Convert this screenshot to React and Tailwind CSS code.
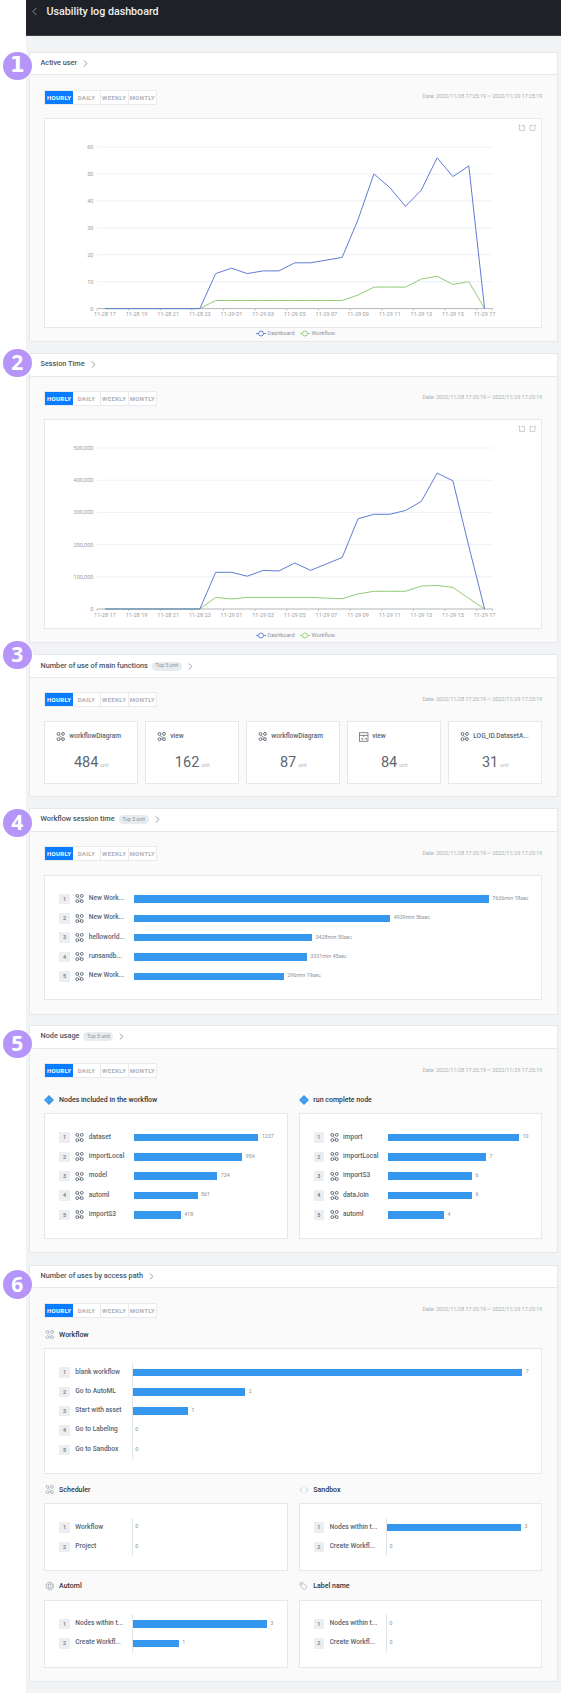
import React from 'react';
import { ChevronLeft, ChevronRight, Code } from 'lucide-react';

const FONT = 'font-["Roboto","Liberation_Sans",sans-serif]';
const labels = ['11-28 17', '11-28 19', '11-28 21', '11-28 23', '11-29 01', '11-29 03', '11-29 05', '11-29 07', '11-29 09', '11-29 11', '11-29 13', '11-29 15', '11-29 17'];

const zeros = [0, 0, 0, 0, 0, 0, 0];
const activeUser = {
  max: 60,
  ticks: [0, 10, 20, 30, 40, 50, 60],
  top: 28,
  bottom: 189.6,
  blue: [...zeros, 13, 15, 13, 14, 14, 17, 17, 18, 19, 33, 50, 45, 38, 44, 56, 49, 53, 0],
  green: [...zeros, 3, 3, 3, 3, 3, 3, 3, 3, 3, 5, 8, 8, 8, 11, 12, 9, 10, 0],
};
const sessionTime = {
  max: 500000,
  ticks: [0, 100000, 200000, 300000, 400000, 500000],
  top: 28,
  bottom: 189,
  blue: [...zeros, 114000, 114000, 102000, 120000, 118000, 143000, 120000, 140000, 160000, 280000, 294000, 294000, 306000, 334000, 422000, 398000, 195000, 0],
  green: [...zeros, 36000, 31000, 36000, 36000, 36000, 36000, 36000, 34000, 32000, 47000, 55000, 55000, 55000, 71000, 73000, 67000, 33000, 0],
};

const NodeIcon = ({ className = 'w-[9.5px] h-[9px] text-[#4b5563]' }) => (
  <svg viewBox="0 0 24 24" className={`shrink-0 ${className}`} fill="none" stroke="currentColor" strokeWidth="2.2">
    <circle cx="6" cy="5" r="3.8" />
    <circle cx="18" cy="5" r="3.8" />
    <circle cx="6" cy="19" r="3.8" />
    <circle cx="18" cy="19" r="3.8" />
    <path d="M7 9l9 6M9.8 19h4.4" strokeWidth="1.6" />
  </svg>
);

const TableIcon = () => (
  <svg viewBox="0 0 18 18" className="w-[9.5px] h-[10px] shrink-0 text-[#4b5563]" fill="none" stroke="currentColor" strokeWidth="1.3">
    <rect x="1" y="1" width="16" height="16" />
    <path d="M1 6h16M9 6v3M4 12h3v3M11 12h3v3" />
  </svg>
);

const Diamond = () => (
  <svg viewBox="0 0 20 20" className="w-[10px] h-[10px] shrink-0">
    <path d="M10 0l10 10-10 10L0 10z" fill="#3b97ee" />
    <path d="M8 8.5L6.5 10 8 11.5M12 8.5l1.5 1.5-1.5 1.5" stroke="#dbeafe" strokeWidth="1" fill="none" />
  </svg>
);

const ChipIcon = () => (
  <svg viewBox="0 0 20 20" className="w-[9.5px] h-[10px] shrink-0 text-[#9ca3af]" fill="none" stroke="currentColor" strokeWidth="1.2">
    <rect x="4" y="4" width="12" height="12" rx="1.5" />
    <rect x="7.5" y="7" width="5" height="6" />
    <path d="M7 1v3M10 1v3M13 1v3M7 16v3M10 16v3M13 16v3M1 7h3M1 10h3M1 13h3M16 7h3M16 10h3M16 13h3" />
  </svg>
);

const TagIcon = () => (
  <svg viewBox="0 0 20 20" className="w-[9.5px] h-[10.5px] shrink-0 text-[#9ca3af]" fill="none" stroke="currentColor" strokeWidth="1.3">
    <path d="M2 4.5L8 2l9 9.5-6 6.5-8.5-9z" />
    <circle cx="6" cy="6" r="1.2" />
    <path d="M5 2l-1.5-1" />
  </svg>
);

const CropIcon = ({ flip }) => (
  <svg viewBox="0 0 14 14" className={`w-[7.5px] h-[7.5px] ${flip ? '-scale-x-100' : ''}`} fill="none" stroke="#a6a8ae" strokeWidth="1.1">
    <path d="M3 1v2M1 3h2v9h9V3H6" />
  </svg>
);

const Badge = ({ n, top }) => (
  <div
    className={`absolute left-[-27px] z-10 flex h-[28.5px] w-[28.5px] items-center justify-center rounded-full bg-[#b596f8] ring-1 ring-white text-white font-bold text-[21px] ${n === 1 ? 'font-["DejaVu_Sans",sans-serif]' : 'font-["Open_Sans",sans-serif]'}`}
    style={{ top }}
  >
    {n}
  </div>
);

const Tabs = () => (
  <div className="flex h-[15px] w-[113px] border border-[#e9ebee] bg-white text-[6px] font-bold tracking-[0.35px] text-[#aeb2b9]">
    <div className="flex w-[28px] items-center justify-center bg-[#0a7cff] text-white">HOURLY</div>
    <div className="flex w-[28px] items-center justify-center border-r border-[#e9ebee]">DAILY</div>
    <div className="flex w-[28px] items-center justify-center border-r border-[#e9ebee]">WEEKLY</div>
    <div className="flex w-[28px] items-center justify-center">MONTLY</div>
  </div>
);

const Toolbar = () => (
  <div className="flex items-center justify-between">
    <Tabs />
    <span className="text-[5.3px] text-[#a9adb3]">Date: 2022/11/28 17:25:19 ~ 2022/11/29 17:25:19</span>
  </div>
);

const Section = ({ n, badgeTop, title, top5, children, className = '' }) => (
  <section className={`relative mx-[3.5px] border border-[#e6e8eb] bg-[#fafafa] ${className}`}>
    <Badge n={n} top={badgeTop} />
    <div className="flex h-[22.6px] items-center border-b border-[#e6e8eb] bg-white pl-[10.5px]">
      <span className="text-[7.3px] font-medium text-[#4b5563]">{title}</span>
      {top5 && (
        <span className="ml-[4px] flex h-[9px] items-center rounded-full bg-[#e9ecef] px-[3.5px] text-[5.2px] text-[#8b929b]">Top 5 unit</span>
      )}
      <ChevronRight className="ml-[3px] h-[11px] w-[11px] text-[#5b6470]" strokeWidth={1.4} />
    </div>
    <div className="px-[14.3px] pt-[14.4px]">{children}</div>
  </section>
);

const fmt = (v) => v.toLocaleString('en-US');

const Chart = ({ data }) => {
  const w = 498;
  const h = 208.3;
  const left = 52;
  const right = 447.5;
  const band = (right - left) / 25;
  const xAt = (i) => left + band * (i + 0.5);
  const yAt = (v) => data.bottom - (v / data.max) * (data.bottom - data.top);
  const line = (vals) => vals.map((v, i) => `${xAt(i).toFixed(1)},${yAt(v).toFixed(1)}`).join(' ');
  return (
    <div className="mt-[13px]">
      <div className="relative h-[210.3px] border border-[#e6e8eb] bg-white">
        <svg viewBox={`0 0 ${w} ${h}`} width={w} height={h} className="block" fontFamily="Roboto, sans-serif">
          {data.ticks.map((t) => (
            <g key={t}>
              {t !== 0 && <line x1={left} x2={right} y1={yAt(t)} y2={yAt(t)} stroke="#eef1f6" strokeWidth="1" />}
              <text x={left - 3.5} y={yAt(t) + 2} textAnchor="end" fontSize="5.6" fill="#9b9da3">{fmt(t)}</text>
            </g>
          ))}
          <line x1={left} x2={right} y1={data.bottom} y2={data.bottom} stroke="#b4b6bb" strokeWidth="1" />
          {Array.from({ length: 13 }).map((_, i) => {
            const x = left + band * i * 2;
            return <line key={i} x1={x} x2={x} y1={data.bottom} y2={data.bottom + 2} stroke="#b4b6bb" strokeWidth="0.8" />;
          })}
          <line x1={right} x2={right} y1={data.bottom} y2={data.bottom + 2} stroke="#b4b6bb" strokeWidth="0.8" />
          {labels.map((l, i) => (
            <text key={l} x={xAt(i * 2)} y={data.bottom + 7.8} textAnchor="middle" fontSize="5.6" fill="#9b9da3">{l}</text>
          ))}
          <polyline points={line(data.green)} fill="none" stroke="#91cc75" strokeWidth="1" />
          <polyline points={line(data.blue)} fill="none" stroke="#5f7bd3" strokeWidth="1" />
        </svg>
        <div className="absolute right-[4.5px] top-[5.5px] flex gap-[3.5px]">
          <CropIcon />
          <CropIcon flip />
        </div>
      </div>
      <div className="flex h-[13px] items-start justify-center pt-[2.4px] pl-[4px] text-[5.6px] leading-[7px] text-[#8f9197]">
        <svg viewBox="0 0 20 14" className="h-[7px] w-[10px]" fill="none" stroke="#5f7bd3" strokeWidth="1.8"><path d="M0 7h20" /><circle cx="10" cy="7" r="5" fill="#fafafa" /></svg>
        <span className="ml-[2px]">Dashboard</span>
        <svg viewBox="0 0 20 14" className="ml-[5px] h-[7px] w-[10px]" fill="none" stroke="#91cc75" strokeWidth="1.8"><path d="M0 7h20" /><circle cx="10" cy="7" r="5" fill="#fafafa" /></svg>
        <span className="ml-[2px]">Workflow</span>
      </div>
    </div>
  );
};

const Metric = ({ name, value, table }) => (
  <div className="flex h-[62.4px] flex-1 flex-col border border-[#e6e8eb] bg-white">
    <div className="flex items-center gap-[3.5px] pl-[11px] pt-[9.5px] text-[6.6px] font-medium text-[#5b6470]">
      {table ? <TableIcon /> : <NodeIcon />}
      <span>{name}</span>
    </div>
    <div className="mt-[12.5px] flex items-baseline justify-center text-[#5f6670]">
      <span className="text-[14.5px] leading-[17px]">{value}</span>
      <span className="ml-[2px] text-[5px] text-[#b3b7bd]">unit</span>
    </div>
  </div>
);

const Rank = ({ n }) => (
  <span className="mr-[5.5px] flex h-[10.5px] w-[10.5px] shrink-0 items-center justify-center bg-[#eceef1] text-[5.5px] font-medium text-[#6b7280]">{n}</span>
);

// one rank row; width is the bar length in px
const BarRow = ({ n, name, width, value, icon = true }) => (
  <div className="flex h-[19.33px] items-center">
    <Rank n={n} />
    {icon && <NodeIcon className="mr-[4.5px] h-[9px] w-[9px] text-[#4b5563]" />}
    <span className={`shrink-0 truncate text-[6.6px] font-medium text-[#5b6470] ${icon ? 'w-[45px]' : 'w-[56.5px]'}`}>{name}</span>
    <div className="flex items-center">
      {width > 0 && <div className="h-[7.5px] bg-[#3597ee]" style={{ width }} />}
      <span className="ml-[3.5px] text-[5.3px] text-[#8c9097]">{value}</span>
    </div>
  </div>
);

const BarBox = ({ rows, className = '', icon = true, axis = false }) => (
  <div className={`border border-[#e6e8eb] bg-white py-[13.7px] pl-[14px] ${className}`}>
    <div className="relative">
      {axis && <div className="absolute top-0 bottom-0 left-[72.5px] w-px bg-[#e3e5e8]" />}
      {rows.map((r, i) => (
        <BarRow key={i} n={i + 1} icon={icon} {...r} />
      ))}
    </div>
  </div>
);

const Heading = ({ icon, children, className = '' }) => (
  <div className={`flex h-[10px] items-center gap-[4.8px] text-[7px] font-medium text-[#2f343b] ${className}`}>
    <span className="flex w-[10px] justify-center">{icon}</span>
    <span>{children}</span>
  </div>
);

const grayNode = <NodeIcon className="h-[9px] w-[9.5px] text-[#a3a9b2]" />;

const App = () => (
  <div className={`${FONT} w-[561px] h-[1693px] overflow-hidden bg-white`}>
    <div className="ml-[25.5px] h-full bg-[#f1f3f5]">
      <header className="flex h-[36px] items-start border-b border-[#3a3d42] bg-[#1e2127] pl-[2px] pt-[4.5px] text-white">
        <ChevronLeft className="h-[13px] w-[13px] text-[#9a9da3]" strokeWidth={1.6} />
        <span className="ml-[6px] text-[10.7px] leading-[13px] font-medium text-[#eef0f2]">Usability log dashboard</span>
      </header>

      <div className="flex flex-col gap-[11px] pt-[15.7px]">
        <Section n={1} badgeTop={-1} title="Active user">
          <Toolbar />
          <Chart data={activeUser} />
        </Section>

        <Section n={2} badgeTop={-5} title="Session Time">
          <Toolbar />
          <Chart data={sessionTime} />
        </Section>

        <Section n={3} badgeTop={-14.5} title="Number of use of main functions" top5>
          <Toolbar />
          <div className="mt-[14px] flex gap-[7px] pb-[12.5px]">
            <Metric name="workflowDiagram" value="484" />
            <Metric name="view" value="162" />
            <Metric name="workflowDiagram" value="87" />
            <Metric name="view" value="84" table />
            <Metric name="LOG_ID.DatasetA..." value="31" />
          </div>
        </Section>

        <Section n={4} badgeTop={-0.5} title="Workflow session time" top5>
          <Toolbar />
          <div className="mt-[14px] pb-[14px]">
            <BarBox
              className="!py-[13.2px]"
              rows={[
                { name: 'New Work...', width: 355, value: '7626min 18sec' },
                { name: 'New Work...', width: 256.5, value: '4939min 56sec' },
                { name: 'helloworld...', width: 178.3, value: '3428min 50sec' },
                { name: 'runsandb...', width: 173, value: '3331min 45sec' },
                { name: 'New Work...', width: 150, value: '296min 19sec' },
              ]}
            />
          </div>
        </Section>

        <Section n={5} badgeTop={3.5} title="Node usage" top5 className="mt-[-1px]">
          <Toolbar />
          <div className="mt-[17px] grid grid-cols-2 gap-[10.5px] pb-[13px]">
            <div>
              <Heading icon={<Diamond />}>Nodes included in the workflow</Heading>
              <BarBox
                className="mt-[8px]"
                rows={[
                  { name: 'dataset', width: 124.6, value: '1237' },
                  { name: 'importLocal', width: 108.5, value: '954' },
                  { name: 'model', width: 83.5, value: '734' },
                  { name: 'automl', width: 63.8, value: '561' },
                  { name: 'importS3', width: 47, value: '418' },
                ]}
              />
            </div>
            <div>
              <Heading icon={<Diamond />}>run complete node</Heading>
              <BarBox
                className="mt-[8px]"
                rows={[
                  { name: 'import', width: 131, value: '10' },
                  { name: 'importLocal', width: 98, value: '7' },
                  { name: 'importS3', width: 84, value: '6' },
                  { name: 'dataJoin', width: 84, value: '6' },
                  { name: 'automl', width: 56, value: '4' },
                ]}
              />
            </div>
          </div>
        </Section>

        <Section n={6} badgeTop={4.5} title="Number of uses by access path" className="mt-[0.4px]">
          <Toolbar />
          <div className="mt-[12.3px]">
            <Heading icon={grayNode}>Workflow</Heading>
            <BarBox
              className="mt-[8.3px]"
              icon={false}
              axis
              rows={[
                { name: 'blank workflow', width: 390.5, value: '7' },
                { name: 'Go to AutoML', width: 113.5, value: '2' },
                { name: 'Start with asset', width: 56.3, value: '1' },
                { name: 'Go to Labeling', width: 0, value: '0' },
                { name: 'Go to Sandbox', width: 0, value: '0' },
              ]}
            />
          </div>
          <div className="mt-[10.7px] grid grid-cols-2 gap-x-[10.5px] gap-y-[10.3px] pb-[13px]">
            <div>
              <Heading icon={grayNode}>Scheduler</Heading>
              <BarBox className="mt-[8.3px]" icon={false} axis rows={[{ name: 'Workflow', width: 0, value: '0' }, { name: 'Project', width: 0, value: '0' }]} />
            </div>
            <div>
              <Heading icon={<Code className="h-[10px] w-[10px] text-[#a3a9b2]" strokeWidth={1.2} />}>Sandbox</Heading>
              <BarBox className="mt-[8.3px]" icon={false} axis rows={[{ name: 'Nodes within t...', width: 135, value: '3' }, { name: 'Create Workfl...', width: 0, value: '0' }]} />
            </div>
            <div>
              <Heading icon={<ChipIcon />}>Automl</Heading>
              <BarBox className="mt-[8.3px]" icon={false} axis rows={[{ name: 'Nodes within t...', width: 135, value: '3' }, { name: 'Create Workfl...', width: 47, value: '1' }]} />
            </div>
            <div>
              <Heading icon={<TagIcon />}>Label name</Heading>
              <BarBox className="mt-[8.3px]" icon={false} axis rows={[{ name: 'Nodes within t...', width: 0, value: '0' }, { name: 'Create Workfl...', width: 0, value: '0' }]} />
            </div>
          </div>
        </Section>
      </div>
    </div>
  </div>
);

export default App;
